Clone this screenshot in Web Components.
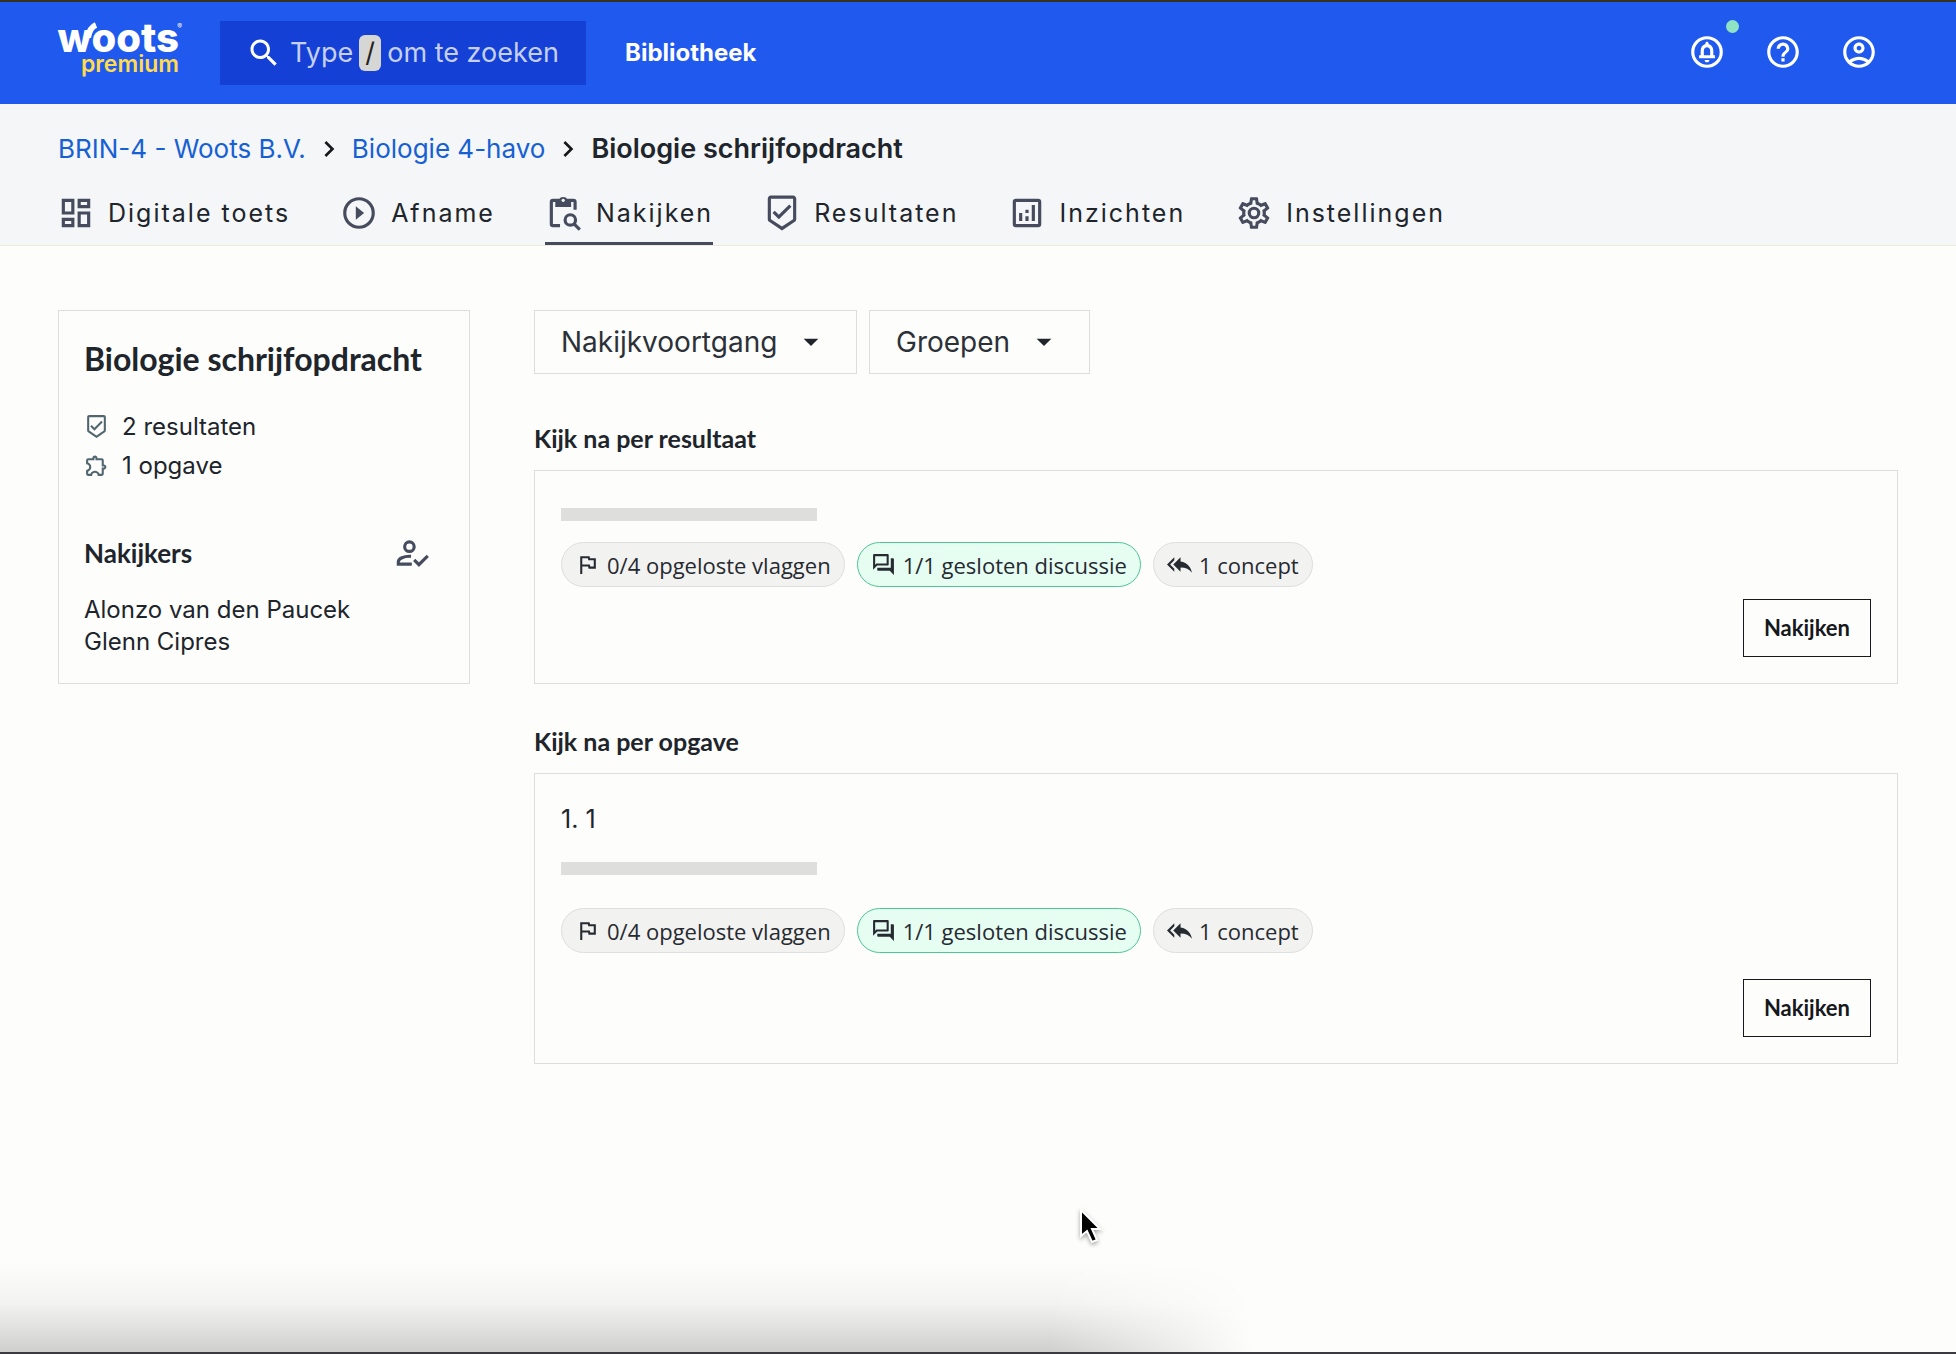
<!DOCTYPE html>
<html lang="nl">
<head>
<meta charset="utf-8">
<meta name="viewport" content="width=device-width, initial-scale=1">
<title>Biologie schrijfopdracht</title>
<style>
  html { background: #fdfdfc; }
  body {
    margin: 0;
    font-family: Inter, sans-serif;
    color: #20242b;
    --display: Lato, sans-serif;
    --chip: "Open Sans", sans-serif;
    --slate: #464c5e;
    --line: #dddddb;
  }
</style>
</head>
<body>
<woots-page></woots-page>

<script>
const ICONS = {
  search: '<path d="M15.5 14h-.79l-.28-.27C15.41 12.59 16 11.11 16 9.5 16 5.91 13.09 3 9.5 3S3 5.91 3 9.5 5.91 16 9.5 16c1.61 0 3.09-.59 4.23-1.57l.27.28v.79l5 4.99L20.49 19l-4.99-5zm-6 0C7.01 14 5 11.99 5 9.5S7.01 5 9.5 5 14 7.01 14 9.5 11.99 14 9.5 14z"/>',
  bell: '<circle cx="12" cy="12" r="9" fill="none" stroke="currentColor" stroke-width="2"/><path d="M12 18.5c.83 0 1.5-.67 1.5-1.5h-3c0 .83.67 1.5 1.5 1.5z"/><path d="M16 11.39c0-2.11-1.03-3.92-3-4.39V6.5c0-.57-.43-1-1-1s-1 .43-1 1V7c-1.97.47-3 2.27-3 4.39V14H7v2h10v-2h-1v-2.61zM14 14h-4v-3c0-1.1.9-2 2-2s2 .9 2 2v3z"/>',
  help: '<path d="M11 18h2v-2h-2v2zm1-16C6.48 2 2 6.48 2 12s4.48 10 10 10 10-4.48 10-10S17.52 2 12 2zm0 18c-4.41 0-8-3.59-8-8s3.59-8 8-8 8 3.59 8 8-3.59 8-8 8zm0-14c-2.21 0-4 1.79-4 4h2c0-1.1.9-2 2-2s2 .9 2 2c0 2-3 1.75-3 5h2c0-2.25 3-2.5 3-5 0-2.21-1.79-4-4-4z"/>',
  account: '<path d="M12 2C6.48 2 2 6.48 2 12s4.48 10 10 10 10-4.48 10-10S17.52 2 12 2zM7.35 18.5C8.66 17.56 10.26 17 12 17s3.34.56 4.65 1.5c-1.31.94-2.91 1.5-4.65 1.5s-3.34-.56-4.65-1.5zm10.79-1.38C16.45 15.8 14.32 15 12 15s-4.45.8-6.14 2.12C4.7 15.73 4 13.95 4 12c0-4.42 3.58-8 8-8s8 3.58 8 8c0 1.95-.7 3.73-1.86 5.12zM12 6c-1.93 0-3.5 1.57-3.5 3.5S10.07 13 12 13s3.5-1.57 3.5-3.5S13.93 6 12 6zm0 5c-.83 0-1.5-.67-1.5-1.5S11.17 8 12 8s1.5.67 1.5 1.5S12.83 11 12 11z"/>',
  chevron: '<path d="M10 6L8.59 7.41 13.17 12l-4.58 4.59L10 18l6-6z"/>',
  caret: '<path d="M6.5 9.5l5.5 5.5 5.5-5.5z"/>',
  dashboard: '<path d="M19 5v2h-4V5h4M9 5v6H5V5h4m10 8v6h-4v-6h4M9 17v2H5v-2h4M21 3h-8v6h8V3zM11 3H3v10h8V3zm10 8h-8v10h8V11zm-10 4H3v6h8v-6z"/>',
  play: '<circle cx="12" cy="12" r="9" fill="none" stroke="currentColor" stroke-width="2"/><path d="M10 7.8v8.4l5.2-4.2z"/>',
  clipboard: '<path d="M9.5 20H5a1 1 0 0 1-1-1V5a1 1 0 0 1 1-1h13a1 1 0 0 1 1 1v5" fill="none" stroke="currentColor" stroke-width="2"/><path d="M6.5 4h2.2a2.9 2.9 0 0 1 5.6 0h2.2v4.2h-10z"/><circle cx="11.5" cy="4" r="1" fill="#f4f6f8"/><circle cx="16" cy="16.4" r="3.3" fill="none" stroke="currentColor" stroke-width="2"/><path d="M18.3 18.8l3.7 3.7" stroke="currentColor" stroke-width="2"/>',
  shield: '<path d="M19 1H5c-1.1 0-1.99.9-1.99 2L3 15.93c0 .69.35 1.3.88 1.66L12 23l8.11-5.41c.53-.36.88-.97.88-1.66L21 3c0-1.1-.9-2-2-2zm-7 19.6l-7-4.66V3h14v12.93l-7 4.67zm-2.01-7.42l-2.58-2.59L6 12l4 4 8-8-1.42-1.42z"/>',
  chart: '<rect x="4" y="4" width="16" height="16" rx="1" fill="none" stroke="currentColor" stroke-width="2"/><path d="M7 12h2v5H7zM15 7h2v10h-2zM11 14h2v3h-2zM11 10h2v2h-2z"/>',
  cog: '<path d="M12,8A4,4 0 0,1 16,12A4,4 0 0,1 12,16A4,4 0 0,1 8,12A4,4 0 0,1 12,8M12,10A2,2 0 0,0 10,12A2,2 0 0,0 12,14A2,2 0 0,0 14,12A2,2 0 0,0 12,10M10,22C9.75,22 9.54,21.82 9.5,21.58L9.13,18.93C8.5,18.68 7.96,18.34 7.44,17.94L4.95,18.95C4.73,19.03 4.46,18.95 4.34,18.73L2.34,15.27C2.21,15.05 2.27,14.78 2.46,14.63L4.57,12.97L4.5,12L4.57,11L2.46,9.37C2.27,9.22 2.21,8.95 2.34,8.73L4.34,5.27C4.46,5.05 4.73,4.96 4.95,5.05L7.44,6.05C7.96,5.66 8.5,5.32 9.13,5.07L9.5,2.42C9.54,2.18 9.75,2 10,2H14C14.25,2 14.46,2.18 14.5,2.42L14.87,5.07C15.5,5.32 16.04,5.66 16.56,6.05L19.05,5.05C19.27,4.96 19.54,5.05 19.66,5.27L21.66,8.73C21.79,8.95 21.73,9.22 21.54,9.37L19.43,11L19.5,12L19.43,13L21.54,14.63C21.73,14.78 21.79,15.05 21.66,15.27L19.66,18.73C19.54,18.95 19.27,19.04 19.05,18.95L16.56,17.95C16.04,18.34 15.5,18.68 14.87,18.93L14.5,21.58C14.46,21.82 14.25,22 14,22H10M11.25,4L10.88,6.61C9.68,6.86 8.62,7.5 7.85,8.39L5.44,7.35L4.69,8.65L6.8,10.2C6.4,11.37 6.4,12.64 6.8,13.8L4.68,15.36L5.43,16.66L7.86,15.62C8.63,16.5 9.68,17.14 10.87,17.38L11.24,20H12.76L13.13,17.39C14.32,17.14 15.37,16.5 16.14,15.62L18.57,16.66L19.32,15.36L17.2,13.81C17.6,12.64 17.6,11.37 17.2,10.2L19.31,8.65L18.56,7.35L16.15,8.39C15.38,7.5 14.32,6.86 13.12,6.62L12.75,4H11.25Z"/>',
  puzzle: '<path d="M10.5 4.5c.28 0 .5.22.5.5v2h6v6h2c.28 0 .5.22.5.5s-.22.5-.5.5h-2v6h-2.12c-.68-1.75-2.39-3-4.38-3s-3.7 1.25-4.38 3H4v-2.12c1.75-.68 3-2.39 3-4.38 0-1.99-1.24-3.7-2.99-4.38L4 7h6V5c0-.28.22-.5.5-.5m0-2C9.12 2.5 8 3.62 8 5H4c-1.1 0-1.99.9-1.99 2v3.8h.29c1.49 0 2.7 1.21 2.7 2.7s-1.21 2.7-2.7 2.7H2V20c0 1.1.9 2 2 2h3.8v-.3c0-1.49 1.21-2.7 2.7-2.7s2.7 1.21 2.7 2.7v.3H17c1.1 0 2-.9 2-2v-4c1.38 0 2.5-1.12 2.5-2.5S20.38 11 19 11V7c0-1.1-.9-2-2-2h-4c0-1.38-1.12-2.5-2.5-2.5z"/>',
  grader: '<g fill="none" stroke="currentColor" stroke-width="2"><circle cx="11" cy="8" r="3"/><path d="M12 14.1c-4.6-.3-8 1.6-8 3.4V19h8.5"/><path d="M14 16.4l3 3 5.6-5.6"/></g>',
  flag: '<path d="M12.36 6l.4 2H18v6h-3.36l-.4-2H7V6h5.36M14 4H5v17h2v-7h5.6l.4 2h7V6h-5.6L14 4z"/>',
  forum: '<path d="M15 4v7H5.17L4 12.17V4h11m1-2H3c-.55 0-1 .45-1 1v14l4-4h10c.55 0 1-.45 1-1V3c0-.55-.45-1-1-1zm5 4h-2v9H6v2c0 .55.45 1 1 1h11l4 4V7c0-.55-.45-1-1-1z"/>',
  replyall: '<path d="M7 8V5l-7 7 7 7v-3l-4-4 4-4zm6 1V5l-7 7 7 7v-4.1c5 0 8.5 1.6 11 5.1-1-5-4-10-11-11z"/>'
};

function define(name, html) {
  const template = document.createElement('template');
  template.innerHTML = html;
  customElements.define(name, class extends HTMLElement {
    constructor() {
      super();
      this.attachShadow({ mode: 'open' }).append(template.content.cloneNode(true));
    }
  });
}

customElements.define('w-icon', class extends HTMLElement {
  connectedCallback() {
    if (this.shadowRoot) return;
    const size = this.getAttribute('size') || 24;
    this.attachShadow({ mode: 'open' }).innerHTML =
      `<style>:host{display:block;flex:none;width:${size}px;height:${size}px}svg{display:block}</style>
       <svg width="${size}" height="${size}" viewBox="0 0 24 24" fill="currentColor" aria-hidden="true">${ICONS[this.getAttribute('name')]}</svg>`;
  }
});

define('woots-logo', `
<style>
  :host { display: block; position: relative; width: 121px; padding-bottom: 10px; }
  a { display: flex; flex-direction: column; align-items: flex-end; color: #fff; text-decoration: none; }
  .name { font-size: 40px; line-height: 32px; font-weight: 800; }
  .tier { font-size: 23px; line-height: 20px; font-weight: 600; color: #ffdb4d; }
  svg { position: absolute; left: 26px; top: 0; }
  sup { position: absolute; right: -3px; top: 1px; font-size: 7px; line-height: 8px; color: #fff; }
</style>
<a href="#"><span class="name">woots</span><span class="tier">premium</span></a>
<svg width="14" height="16" viewBox="0 0 14 16" fill="none" stroke="#fff" stroke-width="6"><path d="M4 16C5 9 7 5 12 3"/></svg>
<sup>®</sup>`);

define('search-field', `
<style>
  :host { display: block; }
  label { display: grid; align-items: center; width: 366px; height: 64px; background: #1540d6; color: #c5d0f2; }
  input, .hint { grid-area: 1 / 1; }
  input { height: 64px; box-sizing: border-box; width: 100%; margin: 0; padding: 0 24px 0 70px; border: 0; background: none; font: inherit; font-size: 27px; color: #fff; }
  .hint { display: flex; align-items: center; padding-left: 26px; font-size: 27px; line-height: 32px; white-space: nowrap; }
  w-icon { color: #fff; margin-right: 8px; }
  kbd { margin: 0 6px; width: 22px; height: 36px; border-radius: 6px; background: #d6d6d4; color: #222; text-align: center; font: inherit; line-height: 36px; }
</style>
<label>
  <span class="hint"><w-icon name="search" size="36"></w-icon>Type<kbd>/</kbd>om te zoeken</span>
  <input type="text" aria-label="Zoeken">
</label>`);

define('top-bar', `
<style>
  :host { display: block; background: #2059ee; border-top: 2px solid #35331f; }
  header { display: flex; align-items: center; height: 102px; box-sizing: border-box; padding: 0 78px 0 58px; }
  search-field { margin: 0 39px 0 41px; }
  .library { font-size: 24px; line-height: 32px; font-weight: 700; color: #fff; text-decoration: none; }
  nav { display: flex; gap: 38px; margin-left: auto; padding-bottom: 2px; }
  button { position: relative; padding: 0; border: 0; background: none; color: #fff; }
  .dot { position: absolute; right: -13px; top: -13px; width: 13px; height: 13px; border-radius: 50%; background: #8fe3c4; }
</style>
<header>
  <woots-logo></woots-logo>
  <search-field></search-field>
  <a class="library" href="#">Bibliotheek</a>
  <nav>
    <button aria-label="Meldingen"><w-icon name="bell" size="38"></w-icon><span class="dot"></span></button>
    <button aria-label="Help"><w-icon name="help" size="38"></w-icon></button>
    <button aria-label="Account"><w-icon name="account" size="38"></w-icon></button>
  </nav>
</header>`);

define('bread-crumbs', `
<style>
  :host { display: block; }
  nav { display: flex; align-items: center; gap: 7px; font-size: 26px; line-height: 32px; }
  a { color: #1660d4; text-decoration: none; }
  w-icon { color: #16181c; }
  strong { font-size: 27px; font-weight: 600; }
</style>
<nav aria-label="Kruimelpad">
  <a href="#">BRIN-4 - Woots B.V.</a><w-icon name="chevron" size="32"></w-icon>
  <a href="#">Biologie 4-havo</a><w-icon name="chevron" size="32"></w-icon>
  <strong>Biologie schrijfopdracht</strong>
</nav>`);

define('tab-link', `
<style>
  :host { display: block; border-bottom: 3px solid transparent; }
  :host([active]) { border-color: var(--slate); }
  a { display: flex; align-items: center; gap: 13px; height: 58px; font-size: 25px; line-height: 32px; letter-spacing: 2px; color: #20242b; text-decoration: none; }
</style>
<a href="#"><slot name="icon"></slot><span><slot></slot></span></a>`);

define('page-head', `
<style>
  :host { display: block; background: #f4f6f8; border-bottom: 1px solid #ecebdc; }
  bread-crumbs { padding: 29px 58px 19px; }
  .tabs { display: flex; gap: 50px; padding: 0 57px; }
  w-icon { color: var(--slate); }
</style>
<bread-crumbs></bread-crumbs>
<nav class="tabs">
  <tab-link><w-icon slot="icon" name="dashboard" size="38"></w-icon>Digitale toets</tab-link>
  <tab-link><w-icon slot="icon" name="play" size="38"></w-icon>Afname</tab-link>
  <tab-link active><w-icon slot="icon" name="clipboard" size="38"></w-icon>Nakijken</tab-link>
  <tab-link><w-icon slot="icon" name="shield" size="38"></w-icon>Resultaten</tab-link>
  <tab-link><w-icon slot="icon" name="chart" size="38"></w-icon>Inzichten</tab-link>
  <tab-link><w-icon slot="icon" name="cog" size="38"></w-icon>Instellingen</tab-link>
</nav>`);

define('summary-card', `
<style>
  :host { display: block; border: 1px solid var(--line); padding: 24px 26px 25px 25px; }
  h1 { margin: 0 0 24px; font: 700 32px/48px var(--display); white-space: nowrap; }
  ul { list-style: none; margin: 0; padding: 0; }
  .facts { font-size: 24px; line-height: 39px; }
  .facts li { display: flex; align-items: center; gap: 13px; }
  .facts w-icon { color: #52666f; }
  .row { display: flex; align-items: center; justify-content: space-between; margin: 49px 13px 22px 0; height: 38px; }
  h2 { margin: 0; font: 700 26px/38px var(--display); }
  button { padding: 0; border: 0; background: none; color: var(--slate); }
  .people { font-size: 24px; line-height: 32px; }
</style>
<h1>Biologie schrijfopdracht</h1>
<ul class="facts">
  <li><w-icon name="shield" size="25"></w-icon>2 resultaten</li>
  <li><w-icon name="puzzle" size="25"></w-icon>1 opgave</li>
</ul>
<div class="row"><h2>Nakijkers</h2><button aria-label="Nakijkers wijzigen"><w-icon name="grader" size="38"></w-icon></button></div>
<ul class="people"><li>Alonzo van den Paucek</li><li>Glenn Cipres</li></ul>`);

customElements.define('filter-select', class extends HTMLElement {
  connectedCallback() {
    if (this.shadowRoot) return;
    const label = this.getAttribute('label');
    this.attachShadow({ mode: 'open' }).innerHTML = `
      <style>
        :host { display: grid; align-items: center; }
        select, w-icon { grid-area: 1 / 1; }
        select { appearance: none; box-sizing: border-box; height: 64px; margin: 0; padding: 0 78px 0 26px; border: 1px solid var(--line); border-radius: 0; background: none; font: inherit; font-size: 28px; color: #2c3138; }
        w-icon { justify-self: end; margin-right: 30px; pointer-events: none; color: #20242b; }
      </style>
      <select aria-label="${label}"><option>${label}</option></select>
      <w-icon name="caret" size="32"></w-icon>`;
  }
});

define('status-chip', `
<style>
  :host { display: flex; align-items: center; gap: 7px; height: 45px; box-sizing: border-box; padding: 0 13px; border: 1px solid #dedee0; border-radius: 23px; background: #f2f2f0; font: 22px/32px var(--chip); white-space: nowrap; color: #262a31; }
  :host([done]) { background: #e6fdf2; border-color: #4cc794; }
</style>
<slot name="icon"></slot><span><slot></slot></span>`);

define('grade-section', `
<style>
  :host { display: block; --before-bar: 11px; --after-bar: 21px; --after-chips: 12px; }
  :host([detailed]) { --before-bar: 24px; --after-bar: 33px; --after-chips: 26px; }
  h3 { margin: 0 0 16px; font: 700 25px/32px var(--display); }
  article { display: flex; flex-direction: column; border: 1px solid var(--line); padding: 26px; }
  .title { font-size: 25px; line-height: 38px; }
  .bar { width: 256px; height: 13px; margin: var(--before-bar) 0 var(--after-bar); background: #dededd; }
  .chips { display: flex; flex-wrap: wrap; gap: 12px; margin-bottom: var(--after-chips); }
  button { align-self: flex-end; height: 58px; padding: 0 20px; border: 1px solid #16181c; background: none; font: 700 22px/32px var(--display); color: #16181c; }
</style>
<h3><slot name="heading"></slot></h3>
<article>
  <div class="title"><slot name="title"></slot></div>
  <div class="bar"></div>
  <div class="chips">
    <status-chip><w-icon slot="icon" name="flag" size="25"></w-icon>0/4 opgeloste vlaggen</status-chip>
    <status-chip done><w-icon slot="icon" name="forum" size="25"></w-icon>1/1 gesloten discussie</status-chip>
    <status-chip><w-icon slot="icon" name="replyall" size="25"></w-icon>1 concept</status-chip>
  </div>
  <button>Nakijken</button>
</article>`);

define('mouse-pointer', `
<style>:host { position: absolute; left: 1078px; top: 1207px; } svg { display: block; filter: drop-shadow(0 2px 2px rgba(0,0,0,.35)); }</style>
<svg width="24" height="38" viewBox="0 0 24 38" aria-hidden="true"><path d="M3 3v26l6-5 5 11 5-2-5-11h8z" fill="#000" stroke="#fff" stroke-width="2"/></svg>`);

define('woots-page', `
<style>
  :host { display: flex; flex-direction: column; position: relative; min-height: 100vh; overflow: hidden; }
  main { display: flex; align-items: flex-start; gap: 64px; padding: 64px 58px 0; }
  summary-card { flex: 0 0 412px; box-sizing: border-box; }
  .work { flex: 1; display: flex; flex-direction: column; gap: 41px; }
  .filters { display: flex; gap: 12px; margin-bottom: 7px; }
  footer { margin-top: auto; border-bottom: 2px solid #3a3a40; }
  .shade { width: 64%; height: 90px; background: linear-gradient(to bottom, rgba(0,0,0,0), rgba(0,0,0,.04) 45%, rgba(0,0,0,.18)); -webkit-mask-image: linear-gradient(to right, #000 84%, transparent); mask-image: linear-gradient(to right, #000 84%, transparent); }
</style>
<top-bar></top-bar>
<page-head></page-head>
<main>
  <summary-card></summary-card>
  <div class="work">
    <div class="filters">
      <filter-select label="Nakijkvoortgang"></filter-select>
      <filter-select label="Groepen"></filter-select>
    </div>
    <grade-section><span slot="heading">Kijk na per resultaat</span></grade-section>
    <grade-section detailed><span slot="heading">Kijk na per opgave</span><span slot="title">1. 1</span></grade-section>
  </div>
</main>
<footer><div class="shade"></div></footer>
<mouse-pointer></mouse-pointer>`);
</script>
</body>
</html>
